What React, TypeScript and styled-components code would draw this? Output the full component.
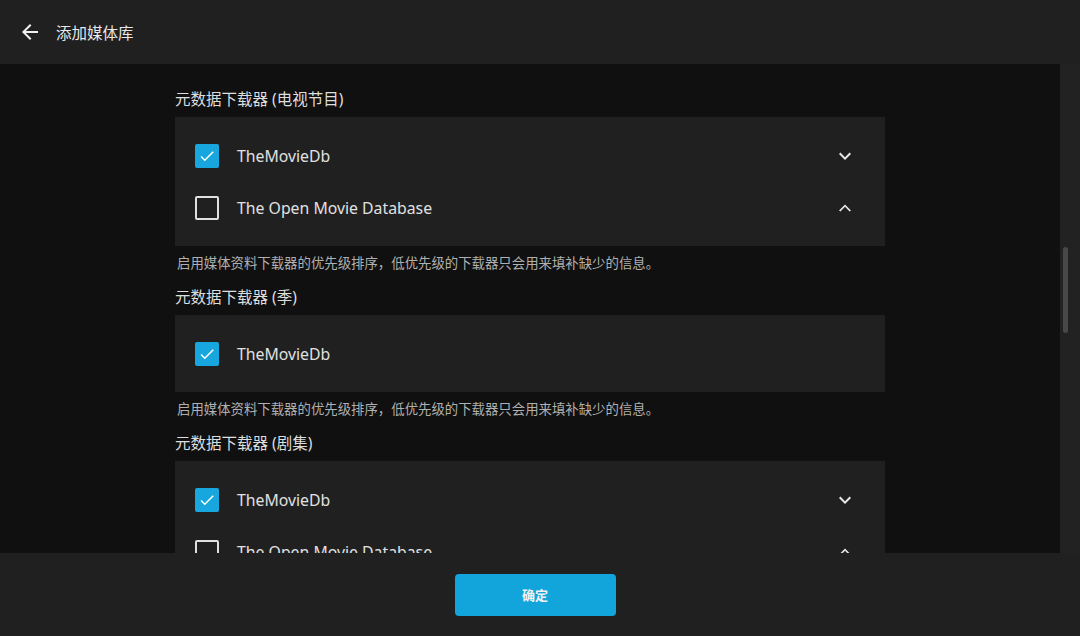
import React from "react";
import styled, { createGlobalStyle } from "styled-components";

const GlobalStyle = createGlobalStyle`
  html, body {
    margin: 0;
    padding: 0;
    background: #101010;
    font-family: "Noto Sans", "Noto Sans CJK SC", sans-serif;
    color: #e6e6e6;
  }
  * { box-sizing: border-box; }
`;

interface Fetcher {
  name: string;
  checked: boolean;
  arrows?: "down" | "up";
}

interface SectionData {
  title: string;
  fetchers: Fetcher[];
}

const sections: SectionData[] = [
  {
    title: "元数据下载器 (电视节目)",
    fetchers: [
      { name: "TheMovieDb", checked: true, arrows: "down" },
      { name: "The Open Movie Database", checked: false, arrows: "up" },
    ],
  },
  {
    title: "元数据下载器 (季)",
    fetchers: [{ name: "TheMovieDb", checked: true }],
  },
  {
    title: "元数据下载器 (剧集)",
    fetchers: [
      { name: "TheMovieDb", checked: true, arrows: "down" },
      { name: "The Open Movie Database", checked: false, arrows: "up" },
    ],
  },
];

const HELP = "启用媒体资料下载器的优先级排序，低优先级的下载器只会用来填补缺少的信息。";

function Chevron({ dir }: { dir: "down" | "up" }) {
  return (
    <svg width="24" height="24" viewBox="0 0 24 24" fill="#e8e8e8">
      {dir === "down" ? (
        <path d="M7.41 8.59L12 13.17l4.59-4.58L18 10l-6 6-6-6 1.41-1.41z" />
      ) : (
        <path d="M7.41 15.41L12 10.83l4.59 4.58L18 14.59l-6-6-6 6z" />
      )}
    </svg>
  );
}

function App() {
  return (
    <Page>
      <GlobalStyle />
      <Header>
        <BackButton>
          <svg width="24" height="24" viewBox="0 0 24 24" fill="#f0f0f0">
            <path d="M20 11H7.83l5.59-5.59L12 4l-8 8 8 8 1.41-1.41L7.83 13H20v-2z" />
          </svg>
        </BackButton>
        <HeaderTitle>添加媒体库</HeaderTitle>
      </Header>

      <Body>
        <Scroller>
          <Column>
            {sections.map((s, i) => (
              <Section key={i}>
                <SectionTitle>{s.title}</SectionTitle>
                <Card>
                  {s.fetchers.map((f, j) => (
                    <Row key={j}>
                      <CheckBox $checked={f.checked}>
                        {f.checked && (
                          <svg width="18" height="18" viewBox="0 0 24 24" fill="#fff">
                            <path d="M9 16.17L4.83 12l-1.42 1.41L9 19 21 7l-1.41-1.41z" />
                          </svg>
                        )}
                      </CheckBox>
                      <RowLabel>{f.name}</RowLabel>
                      {f.arrows && (
                        <ArrowButton>
                          <Chevron dir={f.arrows} />
                        </ArrowButton>
                      )}
                    </Row>
                  ))}
                </Card>
                {i < sections.length - 1 && <Help>{HELP}</Help>}
              </Section>
            ))}
          </Column>
        </Scroller>
        <Track>
          <Thumb />
        </Track>
      </Body>

      <Footer>
        <SubmitButton>确定</SubmitButton>
      </Footer>
    </Page>
  );
}

const Page = styled.div`
  width: 1080px;
  height: 636px;
  display: flex;
  flex-direction: column;
  overflow: hidden;
`;

const Header = styled.header`
  height: 64px;
  flex-shrink: 0;
  background: #202020;
  display: flex;
  align-items: center;
  padding-left: 18px;
`;

const BackButton = styled.div`
  width: 24px;
  height: 24px;
  display: flex;
`;

const HeaderTitle = styled.h1`
  margin: 0 0 0 14px;
  font-size: 15.5px;
  font-weight: 400;
  color: #e8e8e8;
`;

const Body = styled.div`
  flex: 1;
  min-height: 0;
  display: flex;
`;

const Scroller = styled.div`
  flex: 1;
  background: #101010;
  overflow: hidden;
`;

const Column = styled.div`
  width: 710px;
  margin: 0 auto;
  padding-top: 24px;
`;

const Section = styled.section`
  & + & {
    margin-top: 14px;
  }
`;

const SectionTitle = styled.h2`
  margin: 0 0 7px;
  font-size: 15.5px;
  line-height: 22px;
  font-weight: 400;
  color: #dedede;
`;

const Card = styled.div`
  background: #202020;
  padding: 13px 0 12px;
`;

const Row = styled.div`
  height: 52px;
  display: flex;
  align-items: center;
  padding: 0 28px 0 20px;
`;

const CheckBox = styled.div<{ $checked: boolean }>`
  width: 24px;
  height: 24px;
  flex-shrink: 0;
  border-radius: 2px;
  display: flex;
  align-items: center;
  justify-content: center;
  background: ${(p) => (p.$checked ? "#18a6df" : "transparent")};
  border: ${(p) => (p.$checked ? "none" : "2px solid #e0e0e0")};
`;

const RowLabel = styled.span`
  flex: 1;
  margin-left: 18px;
  font-size: 15.8px;
  color: #e0e0e0;
`;

const ArrowButton = styled.div`
  width: 24px;
  height: 24px;
  display: flex;
`;

const Help = styled.p`
  margin: 8px 0 0 2px;
  font-size: 13.4px;
  line-height: 18px;
  color: #b0b0b0;
`;

const Track = styled.div`
  width: 20px;
  background: #222222;
  padding: 183px 0 0 3px;
`;

const Thumb = styled.div`
  width: 5px;
  height: 86px;
  border-radius: 3px;
  background: #484848;
`;

const Footer = styled.footer`
  height: 83px;
  flex-shrink: 0;
  background: #202020;
  display: flex;
  align-items: center;
  justify-content: center;
`;

const SubmitButton = styled.button`
  width: 161px;
  height: 42px;
  border: none;
  border-radius: 4px;
  background: #12a5dc;
  color: #f2f2f2;
  font-family: "Noto Sans", "Noto Sans CJK SC", sans-serif;
  font-size: 13px;
  font-weight: 700;
  margin-left: -10px;
`;

export default App;
